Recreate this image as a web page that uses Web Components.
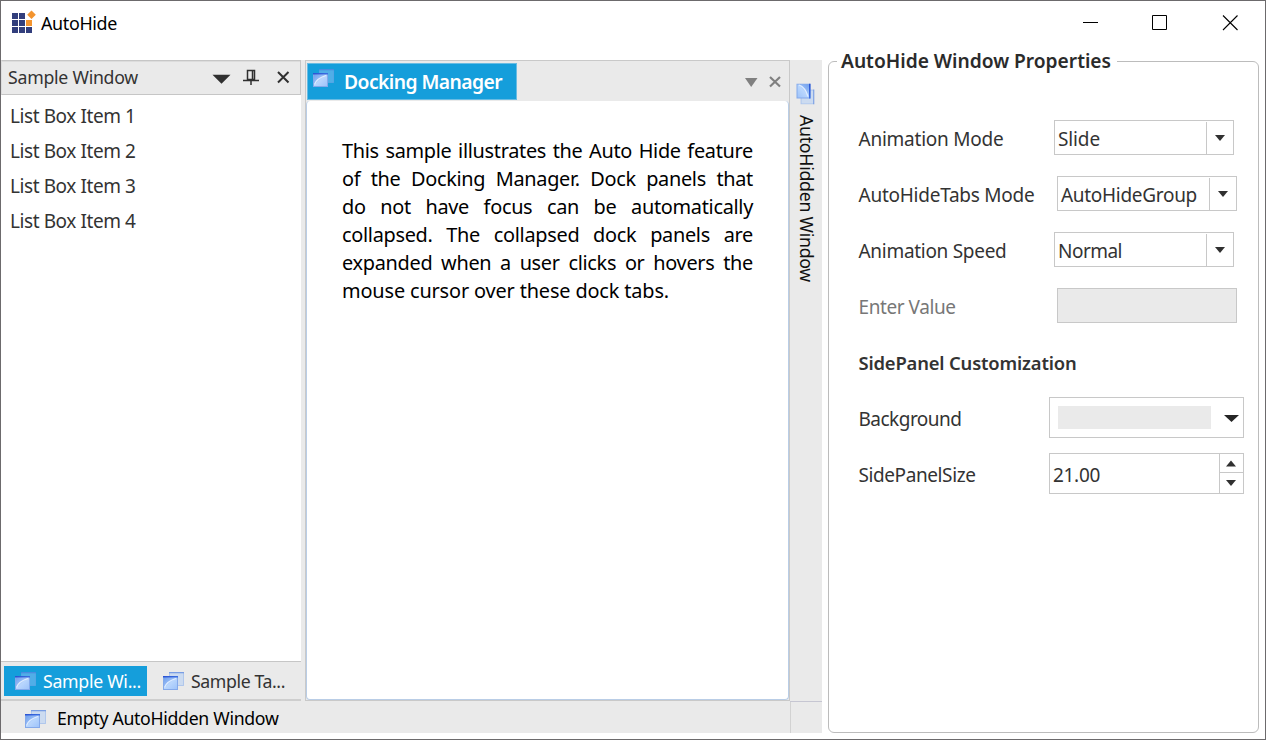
<!DOCTYPE html>
<html lang="en"><head><meta charset="utf-8"><title>AutoHide</title>
<style>html,body{margin:0;height:100%;overflow:hidden;background:#fff}</style></head>
<body><app-window></app-window>
<script>
const define=(name,html,init)=>customElements.define(name,class extends HTMLElement{
  constructor(){super();this.attachShadow({mode:'open'}).innerHTML=html;}
  connectedCallback(){if(init)init.call(this,this.shadowRoot);}
});

// A single line of text whose tracking is adjusted to a given width.
define('fit-text',`<style>:host{display:block;white-space:nowrap;flex:none}span{display:inline-block}</style><span><slot></slot></span>`,function(r){
  const s=r.querySelector('span'),w=+this.getAttribute('w');
  const n=this.textContent.length;
  s.style.letterSpacing=((w-s.getBoundingClientRect().width)/n).toFixed(3)+'px';
});

define('panes-icon',`<style>:host{display:block;width:21px;height:20px;flex:none}svg{display:block}:host([turned]) svg{transform:rotate(90deg)}</style>
<svg width="21" height="20" viewBox="0 0 21 20"><defs><linearGradient id="a" x1="0" y1="0" x2="1" y2="1"><stop offset="0" stop-color="#6fa0ee"/><stop offset=".5" stop-color="#b9d6fd"/><stop offset="1" stop-color="#9cc2fa"/></linearGradient><linearGradient id="b"><stop offset="0" stop-color="#2a52d2"/><stop offset="1" stop-color="#3c6fe0"/></linearGradient></defs>
<rect x="6.500" y=".5" width="14" height="13" fill="#a3c6f8" fill-opacity=".42" stroke="#7da6ea" stroke-opacity=".45"/><rect x="6" y="0" width="15" height="1.300" fill="#3f74dc" fill-opacity=".5"/>
<rect x=".5" y="4.500" width="14" height="13" fill="url(#a)" stroke="#84a9ea"/><rect x="0" y="4" width="15" height="1.500" fill="url(#b)"/><path d="M1 16C2 11 6 8 13 6H1z" fill="#5f92ea" opacity=".3"/><path d="M1.500 15.500C3 11 6 8.500 13 6.500" fill="none" stroke="#e8f2ff" stroke-width="1.200" opacity=".85"/></svg>`);

define('title-bar',`<style>:host{display:flex;height:59px;box-sizing:border-box;padding:0 26px 0 11px;color:#000;font-size:17.9px}
.logo{margin-top:9px;width:25px}.t{margin:9px auto 0 4px;line-height:26px}.b{display:flex;gap:53px;padding-top:14px}svg{display:block}</style>
<svg class="logo" width="25" height="25" viewBox="0 0 25 25"><g fill="#323e7c"><path d="M0 3h6v6H0zM7 3h6v6H7zM0 10h6v6H0zM7 10h6v6H7zM0 17h6v6H0zM7 17h6v6H7zM14 17h6v6h-6z"/></g><path d="M14 10h6v6h-6zM19.500.5l4.300 4.200-4.300 4.300-4.300-4.300z" fill="#f3942f"/></svg>
<fit-text class="t" w="76">AutoHide</fit-text>
<div class="b"><svg width="17" height="17"><path d="M1 7.500h15" stroke="#000"/></svg><svg width="17" height="17"><path d="M.5.5h14v14H.5z" fill="none" stroke="#000"/></svg><svg width="17" height="17"><path d="M1 .500l14.500 14.500M15.500.500l-14.500 14.500" stroke="#000" stroke-width="1.1"/></svg></div>`);

define('tool-pane',`<style>:host{display:flex;flex-direction:column;width:300px;height:641px;background:#fff;box-sizing:border-box;font-size:17.7px;color:#333}
header{height:35px;box-sizing:border-box;border:1px solid #c6c6c6;border-left-color:#ddd;background:#eaeaea;display:flex;align-items:center;padding:0 13px 0 6px;flex:none;box-shadow:inset 0 1px #dcdcdc}
header fit-text{margin-top:-1px}header svg{flex:none;overflow:visible}.sp{flex:1}.list{flex:1;padding:4px 0 0 9px;font-size:19px;line-height:35px}
footer{height:40px;box-sizing:border-box;border-top:1px solid #c6c6c6;border-bottom:2px solid #cecece;background:#eaeaea;display:flex;padding:4px 0 0 3px;flex:none}
.tab{height:30px;box-sizing:border-box;display:flex;align-items:center;padding-left:11px;width:143px;line-height:28px}.on{background:#159edb;color:#fff}.tab+.tab{margin-left:5px}.tab panes-icon{margin-right:7px;margin-top:2px}.tab fit-text{margin-top:-1px}</style>
<header><fit-text w="130">Sample Window</fit-text><span class="sp"></span>
<svg width="73" height="20" viewBox="0 0 73 20"><path d="M-1.500 6.500h18L7.500 15.500z" fill="#303030" transform="translate(0 .2)"/><path d="M33.500 2.500h7v9h-7zM38.500 2v10M29 12.500h16M37 12v5" fill="none" stroke="#303030" stroke-width="1.500"/><path d="M64 4l10.500 10.500M74.500 4L64 14.500" stroke="#303030" stroke-width="2"/></svg></header>
<div class="list"><fit-text w="125.500">List Box Item 1</fit-text><fit-text w="125.500">List Box Item 2</fit-text><fit-text w="125.500">List Box Item 3</fit-text><fit-text w="125.500">List Box Item 4</fit-text></div>
<footer><div class="tab on"><panes-icon></panes-icon><fit-text w="98">Sample Wi...</fit-text></div><div class="tab"><panes-icon></panes-icon><fit-text w="94">Sample Ta...</fit-text></div></footer>`);

define('doc-pane',`<style>:host{display:flex;flex-direction:column;margin-left:4px;width:485px;height:641px;box-sizing:border-box;border:1px solid #c9c9c9;background:#eaeaea}
header{height:40px;display:flex;box-sizing:border-box;padding:2px 6px 0 1px;flex:none}.tab{width:210px;height:37px;box-sizing:border-box;border:1px solid #69bce3;background:#159edb;color:#fff;font:600 19.300px/36px "Noto Sans","Open Sans",sans-serif;display:flex;padding-left:5px}
.tab panes-icon{margin:5px 10px 0 0}.c{margin:9px 1px 0 auto}main{flex:1;background:#fff;border:1px solid #b9cde6;border-top:0;border-radius:4px;padding:36px 35px 0 35px;font-size:19.900px;line-height:28px;color:#000}p{margin:0;text-align-last:justify;letter-spacing:-.3px;white-space:nowrap}</style>
<header><div class="tab"><panes-icon></panes-icon><fit-text w="158">Docking Manager</fit-text></div><svg class="c" width="38" height="18"><path d="M1 6h12.500L7.200 15z" fill="#808080"/><path d="M26 5l10 9.500M36 5L26 14.500" stroke="#808080" stroke-width="2.200"/></svg></header>
<main><p>This sample illustrates the Auto Hide feature</p><p>of the Docking Manager. Dock panels that</p><p>do not have focus can be automatically</p><p>collapsed. The collapsed dock panels are</p><p>expanded when a user clicks or hovers the</p><fit-text w="327">mouse cursor over these dock tabs.</fit-text></main>`);

define('side-strip',`<style>:host{display:flex;flex-direction:column;align-items:center;width:32px;height:642px;box-sizing:border-box;border-bottom:1px solid #c6c6d2;padding-top:24px;color:#111;font-size:17.700px}
.v{writing-mode:vertical-rl;line-height:25px;margin-top:11px;height:168px}.v span{white-space:nowrap}panes-icon{margin-left:-4px}</style><panes-icon turned></panes-icon><div class="v"><span>AutoHidden Window</span></div>`,function(r){
  const s=r.querySelector('span');s.style.letterSpacing=((167-s.getBoundingClientRect().height)/17)+'px';
});

define('bottom-strip',`<style>:host{display:flex;height:31px;align-items:center;box-sizing:border-box;color:#000;font-size:17.700px}
.l{width:790px;height:31px;box-sizing:border-box;border-right:1px solid #d2d2d2;display:flex;align-items:center;padding-left:24px}panes-icon{margin:4px 11px 0 0}</style><div class="l"><panes-icon></panes-icon><fit-text w="221.500">Empty AutoHidden Window</fit-text></div>`);

define('combo-box',`<style>:host{display:flex;width:180px;height:35px;box-sizing:border-box;border:1px solid #c8c8c8;background:#fff;color:#333;line-height:34px;margin-top:-3px}
.t{flex:1;padding-left:3px;padding-top:1px}.d{width:27px;box-sizing:border-box;border-left:1px solid #c8c8c8;margin-top:1px}svg{display:block;margin:13px 0 0 8px}</style><div class="t"><slot></slot></div><div class="d"><svg width="11" height="7"><path d="M0 0h10L5 6z" fill="#303030"/></svg></div>`);

define('property-row',`<style>:host{display:flex;height:56px;align-items:center}.l{width:var(--lead);margin-top:var(--lift,0px)}</style><div class="l"><slot name="label"></slot></div><slot></slot>`);

define('properties-box',`<style>:host{display:block;font-size:19px;color:#333}
fieldset{box-sizing:border-box;width:431px;height:686px;margin:-13px 0 0;border:1px solid #bcbcbc;border-radius:6px;padding:0 0 0 30px;min-width:0}
legend{height:28px;line-height:28px;padding:0 6px 0 4px;margin-left:-22px;font-weight:600;font-size:19.200px;color:#2b2b2b}
.rows{padding-top:36px}property-row{--lead:195px}.w{--lead:198px}.c{--lead:190px}.h{--lift:-2px}property-row>[slot]{margin-left:-.5px}
.g{color:#777}.b{font-weight:600;font-size:18.400px}.dis{width:180px;height:35px;box-sizing:border-box;border:1px solid #c8c8c8;background:#eaeaea;margin-top:-3px}
.big{width:195px;height:41px;box-sizing:border-box;border:1px solid #c8c8c8;display:flex;margin-top:-3px}
.sw{width:153px;height:23px;margin:8px 0 0 8px;background:#eaeaea}.arrow{margin:17px 0 0 13px}.num{flex:1;padding:2px 0 0 3px;line-height:39px}.spin{width:23px;border-left:1px solid #c8c8c8;display:grid;grid-template-rows:19px 20px}.spin svg{display:block;margin:6px 0 0 6px}.spin div+div{border-top:1px solid #c8c8c8;margin-top:-1px}.spin div+div svg{margin-top:7px}</style>
<fieldset><legend><fit-text w="270">AutoHide Window Properties</fit-text></legend><div class="rows">
<property-row><fit-text slot="label" w="145">Animation Mode</fit-text><combo-box><fit-text w="42">Slide</fit-text></combo-box></property-row>
<property-row class="w"><fit-text slot="label" w="176">AutoHideTabs Mode</fit-text><combo-box><fit-text w="136">AutoHideGroup</fit-text></combo-box></property-row>
<property-row><fit-text slot="label" w="148">Animation Speed</fit-text><combo-box><fit-text w="64">Normal</fit-text></combo-box></property-row>
<property-row class="w"><fit-text slot="label" class="g" w="97">Enter Value</fit-text><div class="dis"></div></property-row>
<property-row class="h"><fit-text slot="label" class="b" w="218">SidePanel Customization</fit-text></property-row>
<property-row class="c"><fit-text slot="label" w="103">Background</fit-text><div class="big"><div class="sw"></div><svg class="arrow" width="15" height="8"><path d="M0 0h15L7.500 7z" fill="#252525"/></svg></div></property-row>
<property-row class="c"><fit-text slot="label" w="117">SidePanelSize</fit-text><div class="big"><div class="num"><fit-text w="47">21.00</fit-text></div><div class="spin"><div><svg width="11" height="7"><path d="M0 6.500h10L5 .5z" fill="#303030"/></svg></div><div><svg width="11" height="7"><path d="M0 0h10L5 6z" fill="#303030"/></svg></div></div></div></property-row>
</div></fieldset>`);

define('app-window',`<style>:host{display:flex;flex-direction:column;width:1266px;height:740px;box-sizing:border-box;border:1px solid #6c6a6c;background:#fff;font-family:"Noto Sans","Open Sans",sans-serif}
.body{display:flex;height:673px}.dock{width:821px;height:673px;background:#eaeaea;margin-right:6px}.top{display:flex;height:642px}</style>
<title-bar></title-bar><div class="body"><div class="dock"><div class="top"><tool-pane></tool-pane><doc-pane></doc-pane><side-strip></side-strip></div><bottom-strip></bottom-strip></div><properties-box></properties-box></div>`);
</script></body></html>
